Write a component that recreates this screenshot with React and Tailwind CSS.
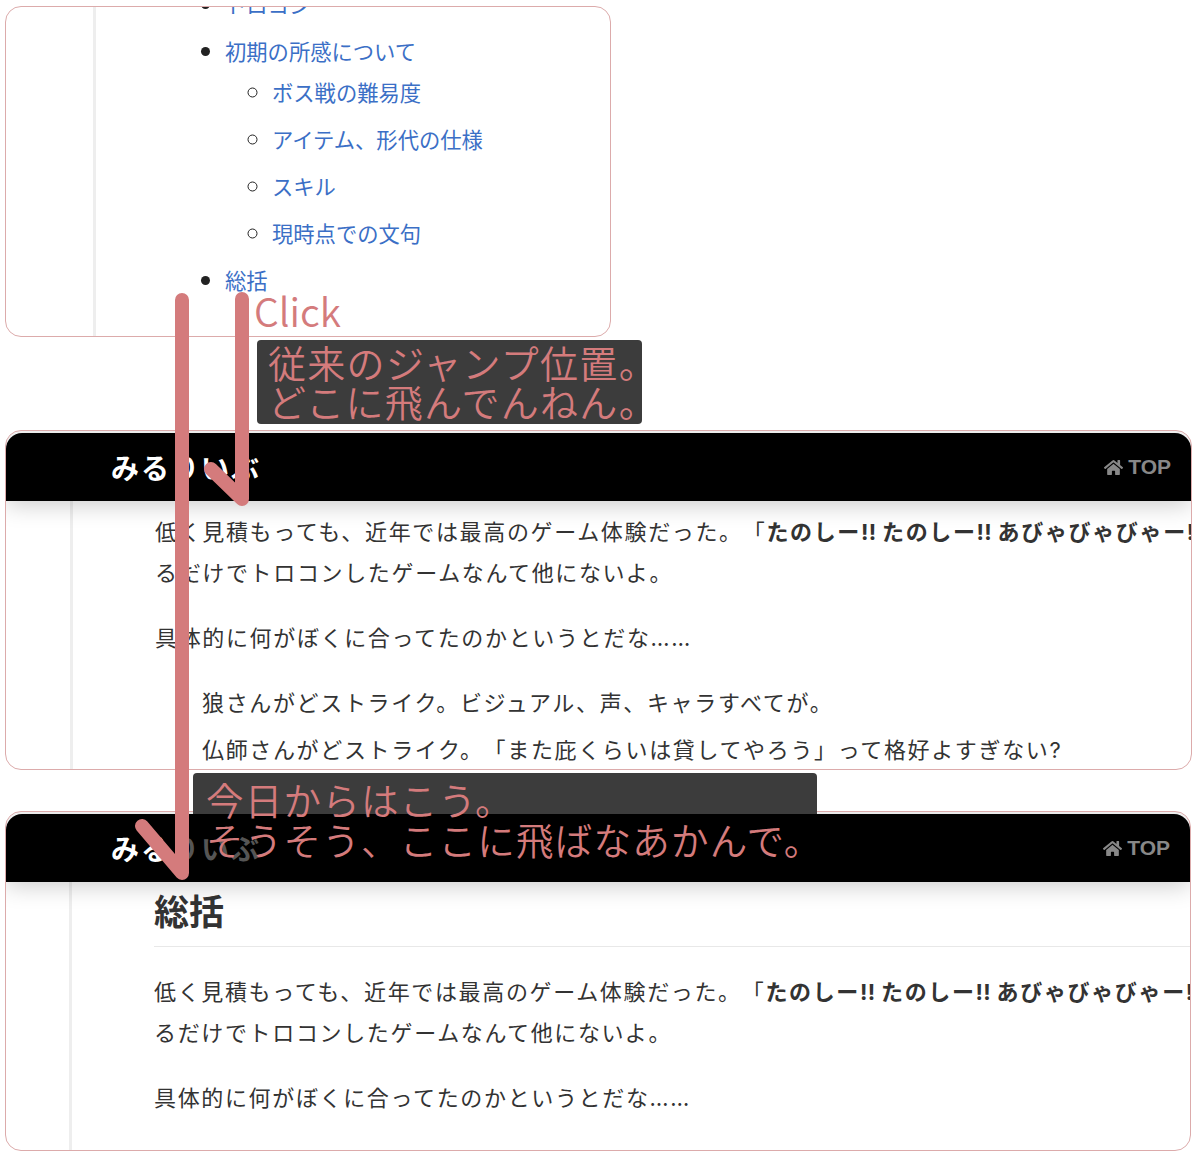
import { FaHome } from 'react-icons/fa';

const jp = "font-['Inter','Noto_Sans_CJK_JP',sans-serif] [text-spacing-trim:space-all]";
const note = "font-['Noto_Sans_CJK_JP','Liberation_Sans',sans-serif] font-[350] text-[#d47b7c] whitespace-nowrap [text-spacing-trim:space-all]";

const SiteHeader = ({ dimLogo }) => (
  <div className="relative z-10 flex h-[68px] shrink-0 items-center justify-between rounded-t-[16px] bg-black pl-[105px] pr-[20px] shadow-[0_3px_24px_rgba(0,0,0,0.22)]">
    <div className="font-['Noto_Sans_CJK_JP',sans-serif] text-[28px] font-bold tracking-[2px] text-white">
      {dimLogo ? (
        <>
          みる<span className="text-[#555]">りいぶ</span>
        </>
      ) : (
        'みるりいぶ'
      )}
    </div>
    <div className="flex items-center gap-[5px] font-['Liberation_Sans',sans-serif] text-[21px] font-bold text-[#888]">
      <FaHome className="h-[19px] w-[19px]" />
      TOP
    </div>
  </div>
);

const Summary = () => (
  <div className={`${jp} text-[22px] leading-[41px] tracking-[1.65px] whitespace-nowrap text-[#333]`}>
    <p>
      低く見積もっても、近年では最高のゲーム体験だった。「
      <strong>
        たのしー<span className="tracking-[0.3px]">!! </span>たのしー<span className="tracking-[0.3px]">!! </span>あびゃびゃびゃー!!
      </strong>
    </p>
    <p>るだけでトロコンしたゲームなんて他にないよ。</p>
    <p className="mt-[24px]">具体的に何がぼくに合ってたのかというとだな……</p>
  </div>
);

const Arrows = () => (
  <svg className="pointer-events-none absolute left-0 top-0 z-30" width="1200" height="1157" fill="none" stroke="#d47b7c" strokeWidth="14" strokeLinecap="round" strokeLinejoin="round">
    <path d="M242 299V499L211 469" />
    <path d="M182 300V873L142 826" />
  </svg>
);

export default function App() {
  return (
    <div className="relative h-[1157px] w-[1200px] overflow-hidden bg-white pl-[5px] pt-[6px]">
      {/* table of contents */}
      <div className="flex h-[331px] w-[606px] overflow-hidden rounded-[16px] border border-[#dcabab]">
        <div className="w-[90px] shrink-0 border-r-[3px] border-[#eee]" />
        <ul className={`${jp} -mt-[26px] list-disc pl-[129px] text-[21.3px] leading-[44.95px] text-[#3b6fc6] marker:text-[27px] marker:text-[#222] [&_li]:mt-px`}>
          <li>トロコン</li>
          <li>
            初期の所感について
            <ul className="-mt-[6px] list-[circle] pl-[47px]">
              <li>ボス戦の難易度</li>
              <li>アイテム、形代の仕様</li>
              <li>スキル</li>
              <li>現時点での文句</li>
            </ul>
          </li>
          <li>総括</li>
        </ul>
      </div>

      {/* before */}
      <div className="mt-[93px] flex h-[340px] w-[1187px] flex-col overflow-hidden rounded-[16px] border border-[#dcabab] pt-[2px]">
        <SiteHeader />
        <div className="flex min-h-0 flex-1">
          <div className="w-[67px] shrink-0 border-r-[3px] border-[#eee]" />
          <div className="pl-[82px] pt-[11px]">
            <Summary />
            <div className={`${jp} mt-[21px] pl-[47px] text-[22px] leading-[47px] tracking-[1.65px] whitespace-nowrap text-[#333]`}>
              <p>狼さんがどストライク。ビジュアル、声、キャラすべてが。</p>
              <p>仏師さんがどストライク。「また庇くらいは貸してやろう」って格好よすぎない?</p>
            </div>
          </div>
        </div>
      </div>

      {/* after */}
      <div className="mt-[41px] flex h-[340px] w-[1186px] flex-col overflow-hidden rounded-[16px] border border-[#dcabab] pt-[2px]">
        <SiteHeader dimLogo />
        <div className="flex min-h-0 flex-1">
          <div className="w-[66px] shrink-0 border-r-[3px] border-[#eee]" />
          <div className="min-w-0 flex-1 pl-[82px] pt-[5px]">
            <h2 className={`${jp} border-b border-[#e8e8e8] pb-[9px] text-[35px] font-bold leading-[50px] text-[#333]`}>総括</h2>
            <div className="pt-[25px]">
              <Summary />
            </div>
          </div>
        </div>
      </div>

      {/* annotations */}
      <div className={`${note} absolute left-[254px] top-[287px] z-20 text-[39px] leading-[46px]`}>Click</div>
      <div className={`${note} absolute left-[257px] top-[340px] z-20 h-[84px] w-[385px] rounded-[4px] bg-[#3c3c3c] pl-[11px] pt-[2px] text-[38px] leading-[39px] tracking-[1.3px]`}>
        <p>従来のジャンプ位置。</p>
        <p>どこに飛んでんねん。</p>
      </div>
      <div className="absolute left-[193px] top-[773px] z-20 h-[41px] w-[624px] rounded-t-[4px] bg-[#3c3c3c]" />
      <div className={`${note} absolute left-[206px] top-[779px] z-20 text-[37.5px] leading-[40px] tracking-[1.25px]`}>
        <p>今日からはこう。</p>
        <p>そうそう、ここに飛ばなあかんで。</p>
      </div>
      <Arrows />
    </div>
  );
}
